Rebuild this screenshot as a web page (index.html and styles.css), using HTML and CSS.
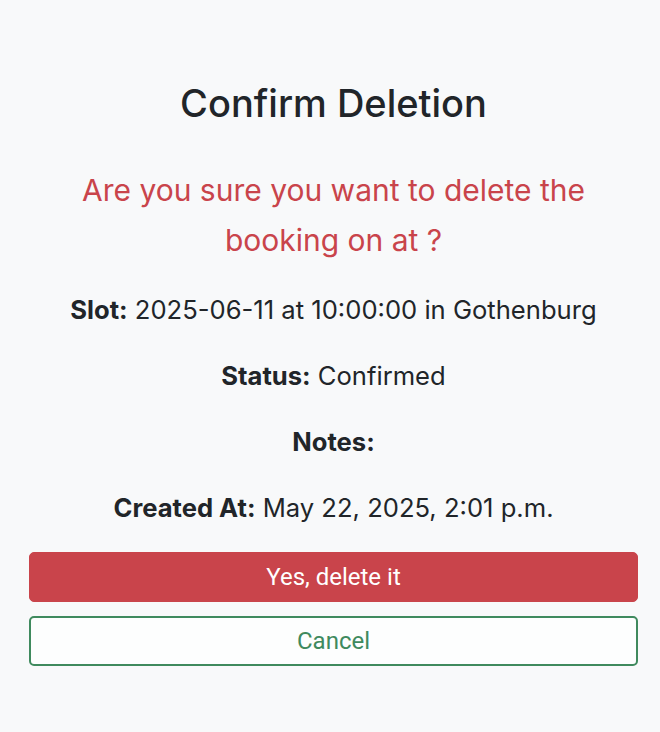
FILE: index.html
```html
<!DOCTYPE html>
<html lang="en">
<head>
<meta charset="utf-8">
<title>Confirm Deletion</title>
<link rel="stylesheet" href="styles.css">
</head>
<body>
<main class="page">
  <h2 class="title">Confirm Deletion</h2>
  <p class="lead-warning">Are you sure you want to delete the booking on at ?</p>
  <p class="detail"><strong>Slot:</strong> 2025-06-11 at 10:00:00 in Gothenburg</p>
  <p class="detail"><strong>Status:</strong> Confirmed</p>
  <p class="detail"><strong>Notes:</strong> </p>
  <p class="detail last"><strong>Created At:</strong> May 22, 2025, 2:01 p.m.</p>
  <form class="actions">
    <button type="button" class="btn btn-danger">Yes, delete it</button>
    <a class="btn btn-outline" href="#">Cancel</a>
  </form>
</main>
</body>
</html>
```
FILE: styles.css
```css
html, body {
  margin: 0;
  padding: 0;
  background: #f8f9fa;
}
body {
  font-family: "Inter", "Noto Sans", sans-serif;
  color: #212529;
}
.page {
  padding: 82px 22px 0 29px;
  text-align: center;
}
.title {
  margin: 0 0 40px;
  font-size: 38px;
  line-height: 43px;
  font-weight: 500;
  color: #212529;
}
.lead-warning {
  margin: 0 auto 27px;
  max-width: 540px;
  font-size: 30px;
  line-height: 50px;
  color: #c9444b;
}
.detail {
  margin: 0 0 30px;
  font-size: 25.6px;
  line-height: 36px;
}
.detail strong {
  font-weight: 700;
}
.detail.last {
  margin-bottom: 26px;
}
.actions {
  display: flex;
  flex-direction: column;
  gap: 14px;
}
.btn {
  display: flex;
  align-items: center;
  justify-content: center;
  box-sizing: border-box;
  height: 50px;
  width: 100%;
  border-radius: 5px;
  font-family: "Roboto", "Inter", sans-serif;
  font-size: 24px;
  text-decoration: none;
  cursor: pointer;
}
.btn-danger {
  background: #c9444b;
  border: 1px solid #c9444b;
  color: #ffffff;
}
.btn-outline {
  background: #fdfefe;
  border: 2px solid #3f8a5e;
  color: #3f8a5e;
}
```
